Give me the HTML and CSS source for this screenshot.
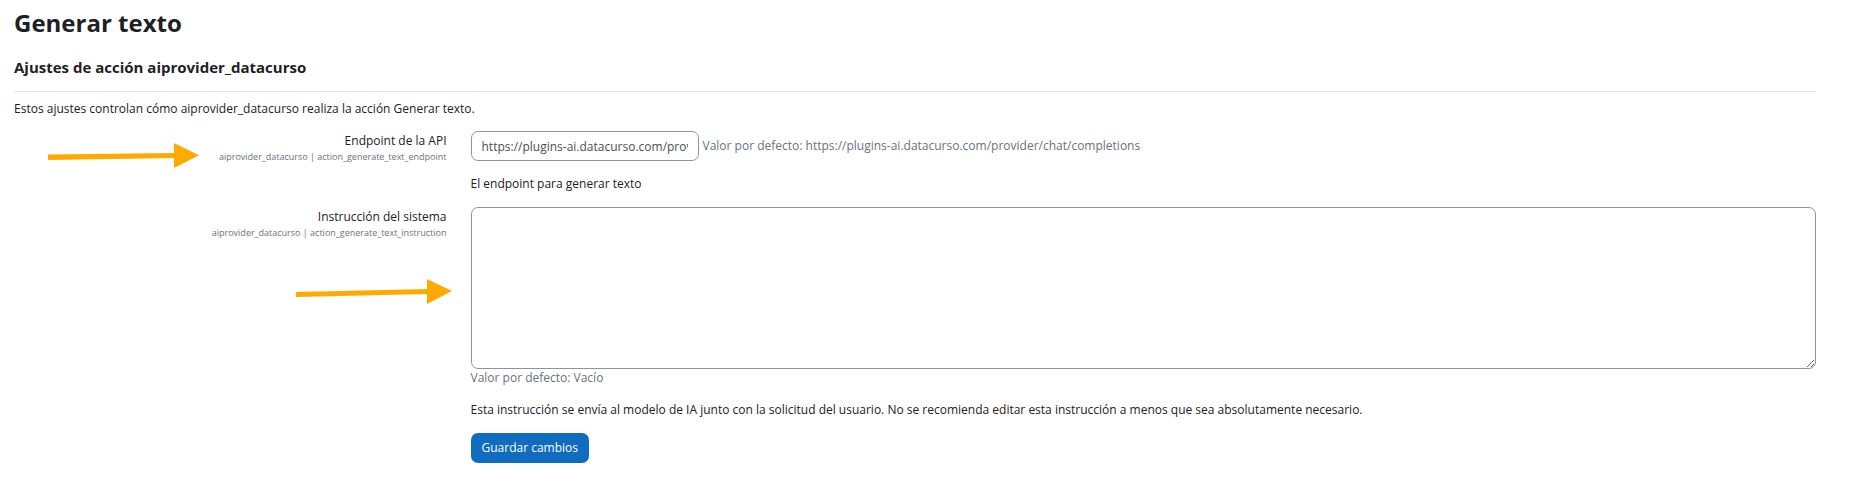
FILE: index.html
```html
<!DOCTYPE html>
<html lang="es">
<head>
<meta charset="utf-8">
<title>Generar texto</title>
<link rel="stylesheet" href="styles.css">
</head>
<body>
<main class="page">
  <h1 class="page-title">Generar texto</h1>
  <form class="settings">
    <h2 class="section-title">Ajustes de acción aiprovider_datacurso</h2>
    <p class="intro">Estos ajustes controlan cómo aiprovider_datacurso realiza la acción Generar texto.</p>

    <div class="row">
      <div class="row-label">
        <label for="endpoint">Endpoint de la API</label>
        <span class="setting-key">aiprovider_datacurso | action_generate_text_endpoint</span>
        <svg class="arrow arrow-endpoint" width="152" height="26" viewBox="0 0 152 26" aria-hidden="true">
          <path d="M0 11.5 127 10v5L0 17z"/><path d="M126 0 151 12.3 126 25z"/>
        </svg>
      </div>
      <div class="row-field">
        <div class="inline">
          <input class="control text" type="text" id="endpoint" value="https://plugins-ai.datacurso.com/provider/chat/completions">
          <span class="default">Valor por defecto: https://plugins-ai.datacurso.com/provider/chat/completions</span>
        </div>
        <p class="help">El endpoint para generar texto</p>
      </div>
    </div>

    <div class="row">
      <div class="row-label">
        <label for="instruction">Instrucción del sistema</label>
        <span class="setting-key">aiprovider_datacurso | action_generate_text_instruction</span>
        <svg class="arrow arrow-instruction" width="156" height="26" viewBox="0 0 156 26" aria-hidden="true">
          <path d="M0 13 132 10v5L0 18z"/><path d="M131 0 156 12 131 25z"/>
        </svg>
      </div>
      <div class="row-field">
        <textarea class="control area" id="instruction" rows="8"></textarea>
        <div class="default">Valor por defecto: Vacío</div>
        <p class="help">Esta instrucción se envía al modelo de IA junto con la solicitud del usuario. No se recomienda editar esta instrucción a menos que sea absolutamente necesario.</p>
      </div>
    </div>

    <div class="row">
      <div class="row-field actions">
        <button class="save" type="submit">Guardar cambios</button>
      </div>
    </div>
  </form>
</main>
</body>
</html>
```
FILE: styles.css
```css
* { box-sizing: border-box; }

body {
  margin: 0;
  background: #fff;
  color: #1d2125;
  font-family: "Segoe UI", "Open Sans", "Noto Sans", sans-serif;
  font-size: 12px;
  line-height: 18px;
}

h1, h2, p { margin: 0; }

.page { padding: 8px 41px 32px 14px; }

.page-title { font-size: 24px; line-height: 30px; }

.section-title {
  margin-top: 19px;
  padding-bottom: 14px;
  border-bottom: 1px solid #e3e3e3;
  font-size: 15px;
  line-height: 20px;
}

.intro { margin: 8px 0 13px; }

.row {
  display: grid;
  grid-template-columns: 1fr 3fr;
  margin: 0 -12px;
}

.row-label {
  position: relative;
  padding: 1px 12px 0;
  text-align: right;
}

.row-label label { display: block; }

.setting-key {
  display: block;
  color: #6a737b;
  font-size: 9px;
  line-height: 14px;
}

.row-field {
  min-width: 0;
  padding: 0 12px;
}

.actions { grid-column: 2; }

.inline {
  display: flex;
  align-items: center;
  gap: 4px;
}

.control {
  border: 1px solid #8f959e;
  border-radius: 7px;
  background: #fff;
  color: #495057;
  font: inherit;
}

.text {
  width: 228px;
  height: 30px;
  padding: 0 10px;
}

.area {
  display: block;
  width: 100%;
  min-height: 162px;
  padding: 6px 10px;
  resize: vertical;
}

.default { color: #6a737b; }

.help { margin: 14px 0; }

.save {
  height: 30px;
  padding: 0 11px;
  border: 0;
  border-radius: 7px;
  background: #0f6cbf;
  color: #fff;
  font: inherit;
}

.arrow {
  position: absolute;
  fill: #ffaa00;
}

.arrow-endpoint { top: 12px; right: 259px; }
.arrow-instruction { top: 72px; right: 7px; }
```
